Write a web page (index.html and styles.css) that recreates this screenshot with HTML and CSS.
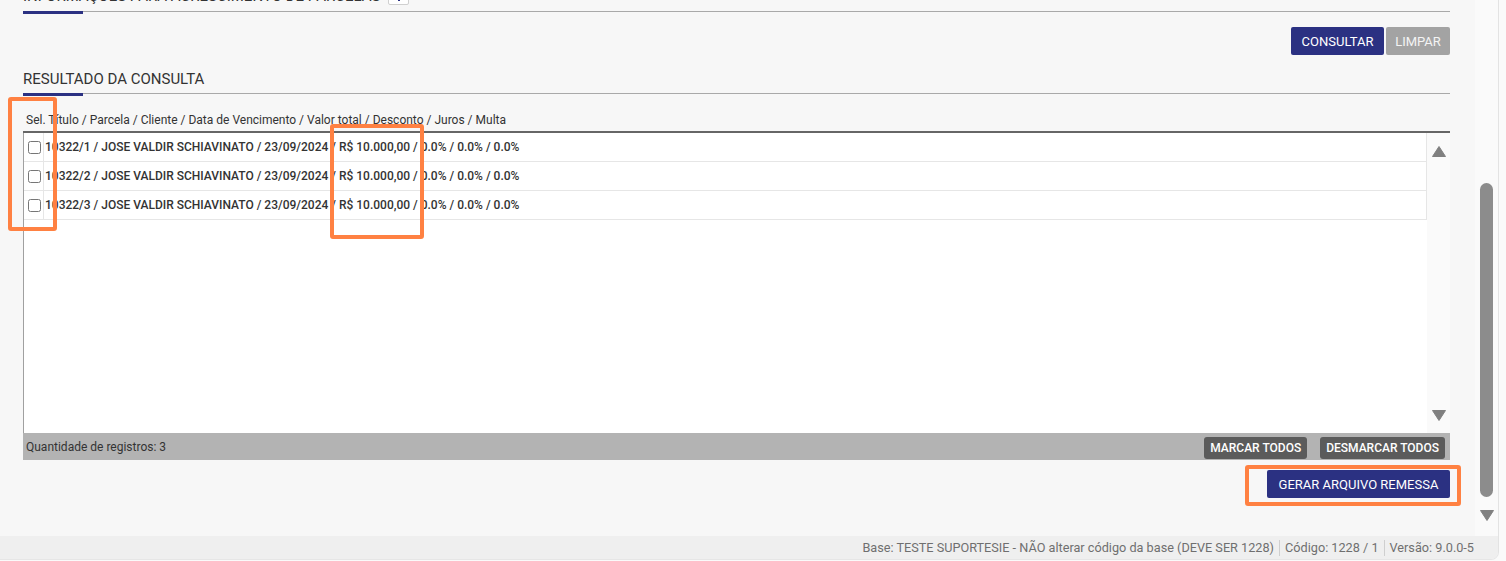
FILE: index.html
```html
<!DOCTYPE html>
<html lang="pt-BR">
<head>
<meta charset="utf-8">
<title>Resultado da consulta</title>
<link rel="stylesheet" href="styles.css">
</head>
<body>
<div class="frame">
  <div class="main">
    <div class="content">
      <div class="tab tab-first">
        <div class="tab-row">
          <div class="tab-title tab-title-first">INFORMAÇÕES PARA ACRÉSCIMENTO DE PARCELAS</div>
          <div class="tab-toggle"><span class="tab-toggle-mark"></span></div>
        </div>
        <div class="tab-line"></div>
        <div class="tab-bar"></div>
      </div>

      <div class="actions">
        <button class="btn btn-primary">CONSULTAR</button>
        <button class="btn btn-muted">LIMPAR</button>
      </div>

      <div class="tab tab-second">
        <div class="tab-title">RESULTADO DA CONSULTA</div>
        <div class="tab-line"></div>
        <div class="tab-bar"></div>
      </div>

      <div class="colhead">Sel. Título / Parcela / Cliente / Data de Vencimento / Valor total / Desconto / Juros / Multa</div>

      <div class="grid">
        <div class="grid-body">
          <div class="rows">
            <div class="row">
              <div class="cell-check"><input type="checkbox"></div>
              <div class="cell-text">10322/1 / JOSE VALDIR SCHIAVINATO / 23/09/2024 / R$ 10.000,00 / 0.0% / 0.0% / 0.0%</div>
            </div>
            <div class="row">
              <div class="cell-check"><input type="checkbox"></div>
              <div class="cell-text">10322/2 / JOSE VALDIR SCHIAVINATO / 23/09/2024 / R$ 10.000,00 / 0.0% / 0.0% / 0.0%</div>
            </div>
            <div class="row">
              <div class="cell-check"><input type="checkbox"></div>
              <div class="cell-text">10322/3 / JOSE VALDIR SCHIAVINATO / 23/09/2024 / R$ 10.000,00 / 0.0% / 0.0% / 0.0%</div>
            </div>
          </div>
          <div class="vscroll">
            <svg class="arrow arrow-up" width="14" height="11" viewBox="0 0 14 11"><path d="M7 0.5 L13.5 10.5 L0.5 10.5 Z" fill="#808080" stroke="#808080" stroke-linejoin="round"/></svg>
            <svg class="arrow arrow-down" width="14" height="11" viewBox="0 0 14 11"><path d="M0.5 0.5 L13.5 0.5 L7 10.5 Z" fill="#808080" stroke="#808080" stroke-linejoin="round"/></svg>
          </div>
        </div>
        <div class="grid-foot">
          <span class="count">Quantidade de registros: 3</span>
          <div class="foot-actions">
            <button class="btn btn-dark">MARCAR TODOS</button>
            <button class="btn btn-dark">DESMARCAR TODOS</button>
          </div>
        </div>
      </div>

      <div class="gen-row">
        <button class="btn btn-primary btn-gen">GERAR ARQUIVO REMESSA</button>
      </div>
    </div>
    <div class="pagescroll">
      <div class="thumb"></div>
      <svg class="arrow page-down" width="14" height="11" viewBox="0 0 14 11"><path d="M0.5 0.5 L13.5 0.5 L7 10.5 Z" fill="#808080" stroke="#808080" stroke-linejoin="round"/></svg>
    </div>
  </div>
  <div class="footer">
    <span class="foot-item">Base: TESTE SUPORTESIE - NÃO alterar código da base (DEVE SER 1228)</span>
    <span class="foot-sep"></span>
    <span class="foot-item">Código: 1228 / 1</span>
    <span class="foot-sep"></span>
    <span class="foot-item">Versão: 9.0.0-5</span>
  </div>
</div>

<div class="mark mark-check"></div>
<div class="mark mark-value"></div>
<div class="mark mark-gen"></div>
</body>
</html>
```

FILE: styles.css
```css
* { box-sizing: border-box; }

html, body {
  margin: 0;
  padding: 0;
}

body {
  background: #fafafa;
  font-family: Roboto, "Liberation Sans", Arial, sans-serif;
  color: #333;
  overflow: hidden;
}

.frame {
  width: 1499px;
  height: 560px;
  display: flex;
  flex-direction: column;
  border-right: 1px solid #e3e3e3;
  border-bottom: 1px solid #e6e6e6;
  border-bottom-right-radius: 8px;
  overflow: hidden;
  background: #f7f7f7;
}

.main {
  display: flex;
  height: 536px;
  flex: none;
}

.content {
  width: 1475px;
  padding: 0 25px 0 23px;
  background: #f7f7f7;
  overflow: hidden;
}

/* tab headers */
.tab-row {
  display: flex;
  align-items: flex-end;
}

.tab-title {
  font-size: 15px;
  line-height: 20px;
  padding-bottom: 4px;
  color: #333;
  white-space: nowrap;
}

.tab-first {
  margin-top: -14px;
}

.tab-title-first {
  padding-bottom: 5px;
}

.tab-toggle {
  width: 21px;
  height: 18px;
  margin-left: 8px;
  margin-bottom: 6px;
  border: 1px solid #d0d0d0;
  background: #fff;
  border-radius: 2px;
  display: flex;
  justify-content: center;
  align-items: flex-end;
}

.tab-toggle-mark {
  width: 2px;
  height: 4px;
  background: #2b3182;
  margin-bottom: 3px;
}

.tab-line {
  height: 1px;
  background: #a9a9a9;
}

.tab-bar {
  width: 60px;
  height: 3px;
  margin-top: -1px;
  background: #2b3182;
}

.tab-second {
  margin-top: 14px;
}

/* buttons */
.btn {
  font-family: Roboto, "Liberation Sans", Arial, sans-serif;
  border: none;
  color: #fff;
  font-size: 12px;
  cursor: pointer;
  padding: 0;
}

.actions {
  margin-top: 13px;
  display: flex;
  justify-content: flex-end;
  gap: 2px;
}

.btn-primary {
  background: #2b3182;
  height: 28px;
  border-radius: 2px;
  padding: 0 10px;
  font-size: 13px;
}

.actions .btn-primary { width: 93px; }

.btn-muted {
  background: #a3a3a3;
  height: 28px;
  width: 64px;
  border-radius: 2px;
  color: #f4f4f4;
  font-size: 13px;
}

.btn-dark {
  background: #5b5b5b;
  height: 22px;
  border-radius: 3px;
  font-weight: 500;
  padding: 0 6px;
}

/* column header */
.colhead {
  margin-top: 16px;
  padding: 0 3px 3px;
  font-size: 12px;
  line-height: 16px;
  color: #333;
  white-space: nowrap;
}

/* grid */
.grid {
  border-top: 2px solid #666;
}

.grid-body {
  display: flex;
  height: 300px;
  background: #fff;
  border-left: 1px solid #a0a0a0;
}

.rows {
  flex: 1;
}

.row {
  display: flex;
  height: 29px;
  border-bottom: 1px solid #e6e6e6;
  border-right: 1px solid #e6e6e6;
}

.cell-check {
  width: 20px;
  border-right: 1px solid #e6e6e6;
  display: flex;
  align-items: center;
  padding-left: 4px;
}

.cell-check input {
  margin: 0;
  width: 13px;
  height: 13px;
}

.cell-text {
  padding-left: 1px;
  font-size: 12px;
  line-height: 28px;
  font-weight: 500;
  color: #333;
  white-space: nowrap;
}

.vscroll {
  width: 23px;
  background: #fafafa;
  display: flex;
  flex-direction: column;
  align-items: center;
  padding-top: 13px;
}

.arrow { display: block; }

.arrow-down {
  margin-top: auto;
  margin-bottom: 12px;
}

.grid-foot {
  height: 27px;
  background: #b3b3b3;
  display: flex;
  align-items: center;
  justify-content: space-between;
  padding: 0 5px 0 3px;
}

.count {
  font-size: 12px;
  color: #333;
}

.foot-actions {
  display: flex;
  gap: 13px;
  margin-top: 3px;
}

.gen-row {
  display: flex;
  justify-content: flex-end;
  margin-top: 10px;
}

.btn-gen {
  width: 183px;
}

/* page scrollbar */
.pagescroll {
  width: 23px;
  background: #fafafa;
  display: flex;
  flex-direction: column;
  padding: 183px 0 0 5px;
}

.thumb {
  width: 13px;
  height: 314px;
  background: #8c8c8c;
  border-radius: 7px;
}

.page-down {
  margin-top: 13px;
}

/* footer */
.footer {
  height: 23px;
  background: #efefef;
  display: flex;
  align-items: center;
  justify-content: flex-end;
  padding-right: 24px;
  font-size: 12.7px;
  color: #6f6f6f;
}

.foot-sep {
  width: 1px;
  height: 16px;
  background: #cfcfcf;
  margin: 0 5px;
}

/* orange annotation marks */
.mark {
  position: absolute;
  border: 4px solid #ff8142;
  border-radius: 3px;
}

.mark-check { left: 8px; top: 97px; width: 49px; height: 134px; }
.mark-value { left: 330px; top: 124px; width: 94px; height: 115px; }
.mark-gen { left: 1245px; top: 465px; width: 216px; height: 41px; }
```
